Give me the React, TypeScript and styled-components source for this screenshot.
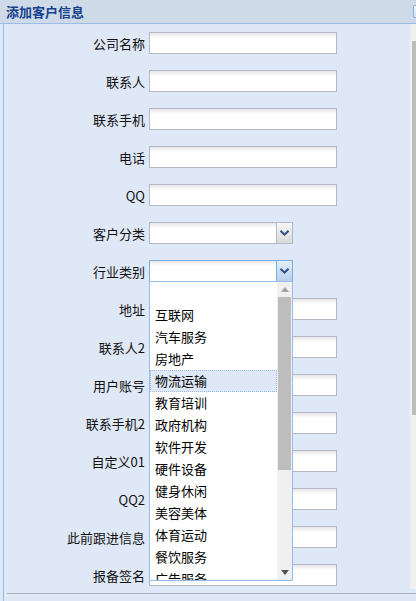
import React from "react";
import styled, { createGlobalStyle, css } from "styled-components";

const GlobalStyle = createGlobalStyle`
  html, body {
    margin: 0;
    padding: 0;
    background: #dfe8f6;
  }
  * {
    box-sizing: border-box;
  }
`;

const FONT = `"Noto Sans CJK SC", "Noto Sans", sans-serif`;

type Field = {
  label: string;
  kind: "text" | "combo";
  open?: boolean;
};

const fields: Field[] = [
  { label: "公司名称", kind: "text" },
  { label: "联系人", kind: "text" },
  { label: "联系手机", kind: "text" },
  { label: "电话", kind: "text" },
  { label: "QQ", kind: "text" },
  { label: "客户分类", kind: "combo" },
  { label: "行业类别", kind: "combo", open: true },
  { label: "地址", kind: "text" },
  { label: "联系人2", kind: "text" },
  { label: "用户账号", kind: "text" },
  { label: "联系手机2", kind: "text" },
  { label: "自定义01", kind: "text" },
  { label: "QQ2", kind: "text" },
  { label: "此前跟进信息", kind: "text" },
  { label: "报备签名", kind: "text" },
];

const industries = [
  "",
  "互联网",
  "汽车服务",
  "房地产",
  "物流运输",
  "教育培训",
  "政府机构",
  "软件开发",
  "硬件设备",
  "健身休闲",
  "美容美体",
  "体育运动",
  "餐饮服务",
  "广告服务",
];

export default function App() {
  return (
    <Page>
      <GlobalStyle />
      <Header>
        <Title>添加客户信息</Title>
        <ToolButton />
      </Header>
      <Body>
        <ContentRow>
          <Form>
            {fields.map((f) => (
              <FormRow key={f.label}>
                <Label>{f.label}</Label>
                {f.kind === "text" ? (
                  <TextInput />
                ) : (
                  <Combo $focused={f.open}>
                    <ComboInput />
                    <Trigger $focused={f.open}>
                      <svg width="9" height="6" viewBox="0 0 9 6">
                        <path
                          d="M0.5 0.8 L4.5 4.6 L8.5 0.8"
                          fill="none"
                          stroke="#2f4f86"
                          strokeWidth="2"
                        />
                      </svg>
                    </Trigger>
                    {f.open && (
                      <DropList>
                        <Items>
                          {industries.map((name, i) => (
                            <Item key={i} $selected={name === "物流运输"}>
                              {name}
                            </Item>
                          ))}
                        </Items>
                        <ListScroll>
                          <ArrowBox>
                            <svg width="8" height="5" viewBox="0 0 8 5">
                              <path d="M0 5 L4 0 L8 5 Z" fill="#a3a3a3" />
                            </svg>
                          </ArrowBox>
                          <Track>
                            <Thumb />
                          </Track>
                          <ArrowBox>
                            <svg width="8" height="5" viewBox="0 0 8 5">
                              <path d="M0 0 L4 5 L8 0 Z" fill="#505050" />
                            </svg>
                          </ArrowBox>
                        </ListScroll>
                      </DropList>
                    )}
                  </Combo>
                )}
              </FormRow>
            ))}
          </Form>
          <PageScroll>
            <PageThumb />
          </PageScroll>
        </ContentRow>
        <FooterLine />
      </Body>
    </Page>
  );
}

const Page = styled.div`
  width: 416px;
  height: 601px;
  overflow: hidden;
  display: flex;
  flex-direction: column;
  background: #dfe8f6;
  font-family: ${FONT};
`;

const Header = styled.div`
  height: 24px;
  flex: none;
  display: flex;
  align-items: center;
  justify-content: space-between;
  padding-left: 6px;
  background: #cfdae8;
  border-bottom: 1px solid #99bbe8;
  overflow: hidden;
`;

const Title = styled.div`
  font-size: 13px;
  font-weight: bold;
  color: #15428b;
  line-height: 22px;
`;

const ToolButton = styled.div`
  width: 14px;
  height: 13px;
  margin-right: -11px;
  margin-bottom: 1px;
  border: 1px solid #8db2e3;
  border-radius: 2px;
  background: linear-gradient(#f3f8fe, #cfe0f5);
`;

const Body = styled.div`
  flex: 1;
  margin-left: 3px;
  border-left: 1px solid #99bbe8;
  display: flex;
  flex-direction: column;
  background: #dfe8f6;
`;

const ContentRow = styled.div`
  height: 565px;
  display: flex;
`;

const Form = styled.div`
  flex: 1;
  padding-top: 8px;
  display: flex;
  flex-direction: column;
  gap: 16px;
`;

const FormRow = styled.div`
  display: flex;
  align-items: center;
  height: 22px;
  gap: 4px;
`;

const Label = styled.div`
  width: 141px;
  text-align: right;
  font-size: 13px;
  color: #111;
  white-space: nowrap;
`;

const fieldBox = css`
  height: 22px;
  border: 1px solid #b5b8c8;
  background: linear-gradient(#e6e6e6, #ffffff 5px, #ffffff);
`;

const TextInput = styled.div`
  ${fieldBox};
  width: 188px;
`;

const Combo = styled.div<{ $focused?: boolean }>`
  position: relative;
  width: 144px;
  height: 22px;
  display: flex;
  border: 1px solid ${(p) => (p.$focused ? "#7eadd9" : "#b5b8c8")};
`;

const ComboInput = styled.div`
  flex: 1;
  background: linear-gradient(#e6e6e6, #ffffff 5px, #ffffff);
`;

const Trigger = styled.div<{ $focused?: boolean }>`
  width: 16px;
  display: flex;
  align-items: center;
  justify-content: center;
  border-left: 1px solid ${(p) => (p.$focused ? "#7eadd9" : "#b5b8c8")};
  background: ${(p) =>
    p.$focused
      ? "linear-gradient(#e3edf8, #b8d0ec)"
      : "linear-gradient(#f7f7f7, #d9d9d9)"};
`;

const DropList = styled.div`
  position: absolute;
  left: -1px;
  top: 20px;
  width: 144px;
  height: 300px;
  border: 1px solid #99bbe8;
  background: #ffffff;
  display: flex;
  overflow: hidden;
  z-index: 5;
`;

const Items = styled.div`
  flex: 1;
  display: flex;
  flex-direction: column;
`;

const Item = styled.div<{ $selected?: boolean }>`
  height: 22px;
  flex: none;
  line-height: 20px;
  padding-left: 4px;
  font-size: 13px;
  color: #000;
  border: 1px dotted ${(p) => (p.$selected ? "#a3bae9" : "transparent")};
  background: ${(p) => (p.$selected ? "#dfe8f6" : "transparent")};
`;

const ListScroll = styled.div`
  width: 15px;
  display: flex;
  flex-direction: column;
  background: #f0f0f0;
`;

const ArrowBox = styled.div`
  height: 15px;
  flex: none;
  display: flex;
  align-items: center;
  justify-content: center;
`;

const Track = styled.div`
  flex: 1;
  padding: 0 1px;
`;

const Thumb = styled.div`
  height: 173px;
  background: #bdbdbd;
`;

const PageScroll = styled.div`
  width: 6px;
  background: #f0f0f0;
  padding: 17px 0 0 2px;
`;

const PageThumb = styled.div`
  height: 374px;
  background: #bdbdbd;
`;

const FooterLine = styled.div`
  margin: 4px 0 0 3px;
  height: 1px;
  background: #b3b3b3;
`;
